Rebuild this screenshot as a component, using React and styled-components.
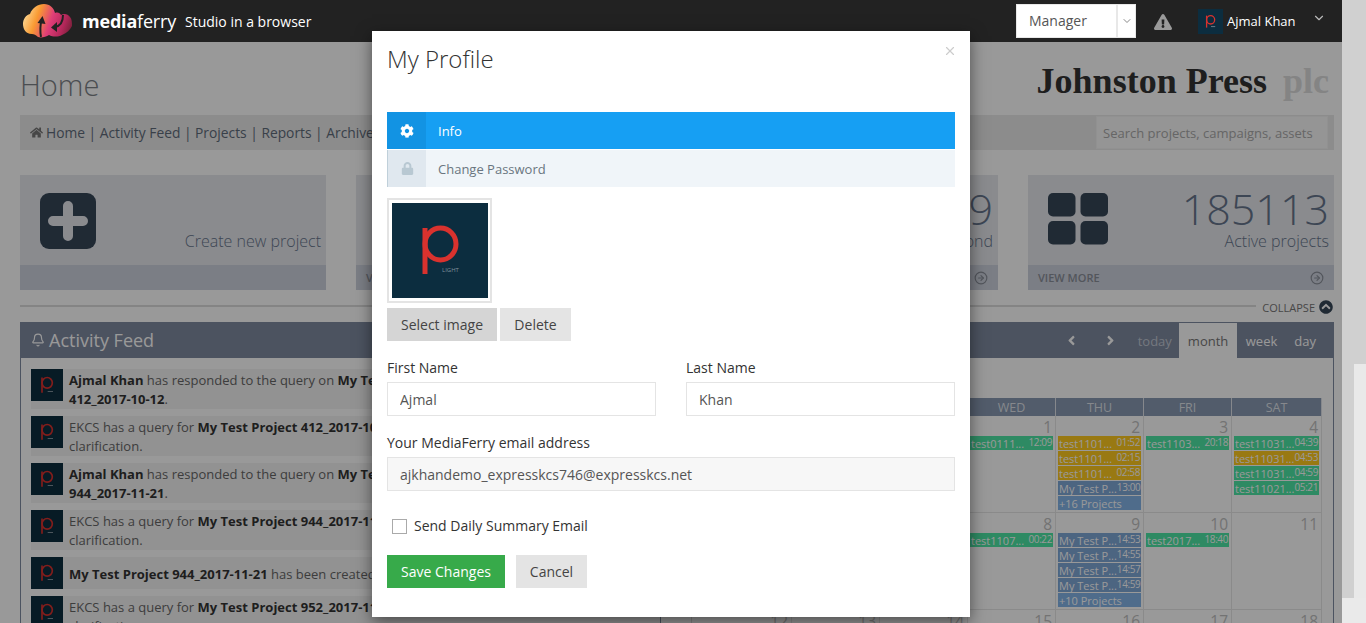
import React from 'react'
import styled, { createGlobalStyle } from 'styled-components'
import {
  FaCog,
  FaLock,
  FaHome,
  FaExclamationTriangle,
  FaAngleLeft,
  FaAngleRight,
  FaChevronCircleUp,
} from 'react-icons/fa'
import { Bell, ChevronDown, CircleArrowRight, X } from 'lucide-react'

const GlobalStyle = createGlobalStyle`
  html, body {
    margin: 0;
    height: 623px;
    overflow: hidden;
    font-family: "Open Sans", "Liberation Sans", sans-serif;
    color: #333;
  }
  * { box-sizing: border-box; }
`

const Shell = styled.div`
  display: grid;
  grid-template-columns: 1342px 24px;
  height: 623px;
  overflow: hidden;
`

const Page = styled.div`
  position: relative;
  overflow: hidden;
  background: #fff;
`

const Backdrop = styled.div`
  position: absolute;
  inset: 0;
  z-index: 1;
  background: rgba(0, 0, 0, 0.4);
`

/* scrollbar-ish strip on the right of the page */
const Strip = styled.div`
  display: flex;
  flex-direction: column;
  background: #eaeaea;
`

const StripTrack = styled.div`
  display: flex;
  height: 598px;
  padding: 364px 0 0 12px;
  background: #d0d0d0;
`

const StripThumb = styled.div`
  flex: 1;
  background: #e9e9e9;
`

const TopBar = styled.header`
  position: relative;
  z-index: 2;
  display: flex;
  align-items: center;
  height: 42px;
  padding: 0 16px 0 23px;
  background: #222;
  color: #fff;
`

const BrandName = styled.div`
  margin-left: 9px;
  font-size: 18px;
  letter-spacing: -0.2px;
  b { font-weight: 700; }
`

const Tagline = styled.div`
  margin-left: 9px;
  font-size: 14px;
`

const TopRight = styled.div`
  display: flex;
  align-items: center;
  margin-left: auto;
`

const RoleSelect = styled.div`
  display: flex;
  width: 120px;
  height: 34px;
  margin-top: -1px;
  background: #fff;
  border: 1px solid #e8e8e8;
  color: #555;
  font-size: 14px;
`

const RoleValue = styled.div`
  flex: 1;
  padding-left: 12px;
  line-height: 31px;
  border-right: 2px solid #e8e8e8;
`

const RoleArrow = styled.div`
  display: flex;
  align-items: center;
  justify-content: center;
  width: 17px;
  color: #888;
`

const AlertIcon = styled(FaExclamationTriangle)`
  margin: 2px 26px 0 18px;
  width: 18px;
  height: 16px;
  color: #999;
`

const TopName = styled.div`
  margin: 0 0 0 4px;
  font-size: 13px;
  width: 85px;
`

const TopChevron = styled(ChevronDown)`
  margin-top: -6px;
  color: #bbb;
`

const AvatarBox = styled.svg`
  display: block;
  flex: none;
  width: ${(p) => p.$w}px;
  height: ${(p) => p.$h || p.$w}px;
  background: #0c2d3f;
`

const Avatar = ({ w, h, label }) => (
  <AvatarBox $w={w} $h={h} viewBox="0 0 96 95">
    <ellipse cx="48.5" cy="41" rx="15.5" ry="16" fill="none" stroke="#d9322e" strokeWidth="5" />
    <path d="M33 25v46" stroke="#d9322e" strokeWidth="5" fill="none" />
    {label
      ? <text x="50" y="69" fontSize="6" fill="#7f8f9a" fontFamily="Open Sans">LIGHT</text>
      : <path d="M50 67h16" stroke="#7f8f9a" strokeWidth="3" />}
  </AvatarBox>
)

const Logo = () => (
  <svg width="50" height="34" viewBox="0 0 50 34" style={{ display: 'block', marginTop: -1 }}>
    <defs>
      <linearGradient id="cloud" x1="0" y1="8" x2="50" y2="26" gradientUnits="userSpaceOnUse">
        <stop offset="0" stopColor="#fde0a0" />
        <stop offset="0.28" stopColor="#f99a32" />
        <stop offset="0.55" stopColor="#df3e78" />
        <stop offset="0.8" stopColor="#b4275a" />
        <stop offset="1" stopColor="#6d1f33" />
      </linearGradient>
    </defs>
    <path
      fill="url(#cloud)"
      d="M9 30C2 30 0 24 0 20C0 15 3 11 7 10C9 4 15 0 21 0C27 0 31 4 32 9C35 8 37 9 38 11C41 9 45 10 47 13C49 15 49 19 49 22C47 26 44 29 39 31C35 33 30 33 26 31C23 33 18 34 15 33C13 31 11 30 9 30Z"
    />
    <path d="M18 33C17 27 17 22 18.5 16" stroke="#222" strokeWidth="2" fill="none" />
    <path d="M14.5 19L19.5 12L22.5 20Z" fill="#222" />
    <path d="M40 11C40 18 37 22 32 23" stroke="#222" strokeWidth="2" fill="none" />
    <path d="M34 18L28 23.5L34 28Z" fill="#222" />
  </svg>
)

const Main = styled.main`
  padding: 0 8px 0 20px;
`

const TitleRow = styled.div`
  display: flex;
  align-items: center;
  justify-content: space-between;
  height: 73px;
`

const PageTitle = styled.h1`
  margin: 12px 0 0;
  font-size: 29px;
  font-weight: 300;
  color: #7d8288;
`

const ClientLogo = styled.div`
  margin: 4px 5px 0 0;
  font-family: "Liberation Serif", serif;
  font-size: 36px;
  font-weight: 700;
  color: #333;
  span {
    margin-left: 16px;
    color: #dcdcdc;
  }
`

const NavBar = styled.nav`
  display: flex;
  align-items: center;
  height: 35px;
  padding: 0 6px 0 10px;
  background: #e9e9e9;
  color: #5f6c7b;
  font-size: 13.8px;
`

const NavHomeIcon = styled(FaHome)`
  width: 13px;
  height: 13px;
  margin-right: 3px;
  color: #777;
`

const NavSearch = styled.input`
  width: 232px;
  height: 33px;
  margin-left: auto;
  padding: 0 6px;
  border: 1px solid #f2f2f2;
  background: #f8f8f8;
  font: 13px "Open Sans", sans-serif;
  &::placeholder { color: #aaa; opacity: 1; }
`

const Cards = styled.section`
  display: grid;
  grid-template-columns: repeat(4, 306px);
  gap: 30px;
  margin-top: 25px;
`

const Card = styled.div`
  display: flex;
  flex-direction: column;
  height: 115px;
  background: #e6e8ed;
`

const CardBody = styled.div`
  flex: 1;
  min-height: 0;
  display: flex;
  justify-content: space-between;
  padding: 18px 5px 13px 20px;
`

const CardText = styled.div`
  display: flex;
  flex-direction: column;
  align-items: flex-end;
  justify-content: flex-end;
  color: #66758c;
`

const CardNumber = styled.div`
  font-size: 43px;
  font-weight: 300;
  line-height: 36px;
  margin-bottom: 3px;
`

const CardLabel = styled.div`
  font-size: 16px;
  font-weight: 300;
  line-height: 22px;
`

const CardFoot = styled.div`
  flex: none;
  display: flex;
  align-items: center;
  justify-content: space-between;
  height: 25px;
  padding: 0 10px;
  background: #cdd2de;
  color: #8a8f99;
  font-size: 11px;
  font-weight: 600;
`

const PlusIcon = () => (
  <svg width="56" height="56" viewBox="0 0 56 56">
    <rect width="56" height="56" rx="9" fill="#364658" />
    <path d="M28 13v30M13 28h30" stroke="#e6e8ed" strokeWidth="10" strokeLinecap="round" />
  </svg>
)

const GridIcon = () => (
  <svg width="60" height="52" viewBox="0 0 60 52">
    <rect width="27.5" height="23.5" rx="5" fill="#364658" />
    <rect x="32.5" width="27.5" height="23.5" rx="5" fill="#364658" />
    <rect y="28" width="27.5" height="23.5" rx="5" fill="#364658" />
    <rect x="32.5" y="28" width="27.5" height="23.5" rx="5" fill="#364658" />
  </svg>
)

const CollapseRow = styled.div`
  display: flex;
  align-items: center;
  gap: 6px;
  height: 14px;
  margin-top: 10px;
  padding-right: 1px;
  color: #777;
  font-size: 11px;
`

const CollapseLine = styled.div`
  flex: 1;
  height: 2px;
  margin-top: -2px;
  background: #ddd;
`

const CollapseIcon = styled(FaChevronCircleUp)`
  width: 14px;
  height: 14px;
  margin-left: -2px;
  color: #364658;
`

const Panel = styled.section`
  margin-top: 8px;
  border: solid #7f8aa0;
  border-width: 0 1px;
`

const PanelHead = styled.div`
  display: flex;
  align-items: stretch;
  height: 36px;
  background: #7f8aa0;
  color: #fff;
`

const PanelTitle = styled.div`
  display: flex;
  align-items: center;
  gap: 4px;
  padding-left: 10px;
  font-size: 18px;
`

const CalNav = styled.div`
  display: flex;
  align-items: center;
  margin-left: auto;
  padding-top: 1px;
  font-size: 13px;
`

const CalArrow = styled.span`
  display: flex;
  width: 39px;
  justify-content: center;
`

const CalTab = styled.span`
  display: flex;
  align-items: center;
  align-self: stretch;
  padding: 0 ${(p) => p.$pad}px;
  ${(p) => p.$on && 'background: #fff; color: #777;'}
  ${(p) => p.$off && 'color: #c2c8d4;'}
`

const PanelBody = styled.div`
  display: flex;
  height: 270px;
`

const Feed = styled.div`
  width: 640px;
  padding: 11px 0 0 10px;
  border-right: 1px solid #7f8aa0;
`

const FeedItem = styled.div`
  display: flex;
  margin-bottom: 7px;
  padding-right: 26px;
  background: #f4f4f4;
  font-size: 13px;
  line-height: 19px;
`

const FeedText = styled.div`
  flex: 1;
  align-self: center;
  margin-left: 6px;
  padding: 2px 0 0;
  color: #666;
  b { color: #333; font-weight: 700; }
`

const ProjectCode = styled.span`
  white-space: nowrap;
`

const FeedStamp = styled.div`
  align-self: flex-end;
  width: 101px;
  font-size: 11px;
  white-space: nowrap;
  color: #666;
`

const Calendar = styled.div`
  width: 630px;
  margin-left: 30px;
  padding-left: 12px;
  border-left: 1px solid #dcdcdc;
`

const CalTitle = styled.div`
  height: 40px;
  line-height: 39px;
  font-size: 15px;
  color: #777;
`

const CalGrid = styled.div`
  display: grid;
  grid-template-columns: repeat(6, 88px) 90px;
`

const DayHead = styled.div`
  height: 18px;
  line-height: 19px;
  text-align: center;
  background: #8999b2;
  border-right: 1px solid #dfe3ea;
  color: #dfe3ea;
  font-size: 12.5px;
`

const DayCell = styled.div`
  height: 97px;
  padding: 0 2px;
  border: solid #e6e6e6;
  border-width: 0 1px 1px 0;
`

const DayNumber = styled.div`
  height: 20px;
  padding: 1px 1px 0 0;
  line-height: 20px;
  text-align: right;
  font-size: 15.5px;
  color: #c0c0c0;
`

const EVENT_COLORS = {
  green: '#4ee6a5',
  yellow: '#ffca1f',
  blue: '#7fa8d8',
  more: '#84b4e8',
}

const Event = styled.div`
  display: flex;
  justify-content: space-between;
  height: 14px;
  margin-bottom: 1px;
  padding: 0 1px;
  background: ${(p) => EVENT_COLORS[p.$kind]};
  color: #fff;
  font-size: 11px;
  line-height: 16px;
  white-space: nowrap;
  overflow: hidden;
  em {
    font-style: normal;
    font-size: 10px;
    letter-spacing: -0.4px;
    line-height: 13px;
  }
`

const WEEKDAYS = ['SUN', 'MON', 'TUE', 'WED', 'THU', 'FRI', 'SAT']

const project = (time) => ['blue', 'My Test P...', time]

const DAYS = [
  { n: 29 }, { n: 30 }, { n: 31 },
  { n: 1, events: [['green', 'test0111...', '12:09']] },
  {
    n: 2,
    events: [
      ['yellow', 'test1101...', '01:52'],
      ['yellow', 'test1101...', '02:15'],
      ['yellow', 'test1101...', '02:58'],
      project('13:00'),
      ['more', '+16 Projects'],
    ],
  },
  { n: 3, events: [['green', 'test1103...', '20:18']] },
  {
    n: 4,
    events: [
      ['green', 'test11031...', '04:39'],
      ['yellow', 'test11031...', '04:53'],
      ['green', 'test11031...', '04:59'],
      ['green', 'test11021...', '05:21'],
    ],
  },
  { n: 5 }, { n: 6 }, { n: 7 },
  { n: 8, events: [['green', 'test1107...', '00:22']] },
  {
    n: 9,
    events: [
      project('14:53'),
      project('14:55'),
      project('14:57'),
      project('14:59'),
      ['more', '+10 Projects'],
    ],
  },
  { n: 10, events: [['green', 'test2017...', '18:40']] },
  { n: 11 },
  { n: 12 }, { n: 13 }, { n: 14 }, { n: 15 }, { n: 16 }, { n: 17 }, { n: 18 },
]

const FEED = [
  <><b>Ajmal Khan</b> has responded to the query on <b>My Test Project <ProjectCode>412_2017-10-12</ProjectCode></b>.</>,
  <>EKCS has a query for <b>My Test Project <ProjectCode>412_2017-10-12</ProjectCode></b> and requires clarification.</>,
  <><b>Ajmal Khan</b> has responded to the query on <b>My Test Project <ProjectCode>944_2017-11-21</ProjectCode></b>.</>,
  <>EKCS has a query for <b>My Test Project <ProjectCode>944_2017-11-21</ProjectCode></b> and requires clarification.</>,
  <><b>My Test Project <ProjectCode>944_2017-11-21</ProjectCode></b> has been created.</>,
  <>EKCS has a query for <b>My Test Project <ProjectCode>952_2017-11-21</ProjectCode></b> and requires clarification.</>,
]

/* modal */
const ModalLayer = styled.div`
  position: absolute;
  inset: 0;
  z-index: 3;
  display: flex;
  justify-content: center;
  align-items: flex-start;
  padding-top: 31px;
`

const Modal = styled.div`
  position: relative;
  width: 598px;
  padding: 13px 15px 29px;
  background: #fff;
  box-shadow: 0 5px 15px rgba(0, 0, 0, 0.5);
`

const ModalTitle = styled.h2`
  margin: 0 0 38px;
  font-size: 24px;
  font-weight: 300;
  line-height: 30px;
  color: #333;
`

const CloseButton = styled(X)`
  position: absolute;
  top: 13px;
  right: 13px;
  color: #ccc;
`

const Tab = styled.div`
  display: flex;
  align-items: center;
  height: 37px;
  margin-bottom: 1px;
  background: ${(p) => (p.$active ? '#169ff3' : '#f0f5f9')};
  color: ${(p) => (p.$active ? '#fff' : '#6a7580')};
  font-size: 13px;
`

const TabIcon = styled.div`
  display: flex;
  align-items: center;
  justify-content: center;
  width: 39px;
  height: 100%;
  margin-right: 12px;
  background: ${(p) => (p.$active ? '#1293e3' : '#e0e8ef')};
  border-left: 1px solid ${(p) => (p.$active ? '#1293e3' : '#c0d0da')};
  color: ${(p) => (p.$active ? '#fff' : '#b8c8d2')};
`

const PhotoFrame = styled.div`
  width: 105px;
  height: 105px;
  margin-top: 11px;
  padding: 3px;
  border: 2px solid #e4e4e4;
`

const ButtonRow = styled.div`
  display: flex;
  gap: ${(p) => p.$gap}px;
  margin-top: ${(p) => p.$top}px;
`

const Button = styled.button`
  height: 33px;
  width: ${(p) => p.$w}px;
  padding: 0;
  border: 0;
  background: ${(p) => p.$bg || '#e4e4e4'};
  color: ${(p) => (p.$bg === '#37aa4a' ? '#fff' : '#444')};
  font: 14px "Open Sans", sans-serif;
`

const FieldRow = styled.div`
  display: grid;
  grid-template-columns: ${(p) => (p.$two ? '269px 269px' : '1fr')};
  justify-content: space-between;
  margin-top: 17px;
`

const Label = styled.label`
  display: block;
  margin-bottom: 4px;
  font-size: 14px;
  line-height: 20px;
  color: #333;
`

const TextInput = styled.input`
  display: block;
  width: 100%;
  height: 34px;
  padding: 0 12px;
  border: 1px solid #e4e4e4;
  background: ${(p) => (p.readOnly ? '#f7f7f7' : '#fff')};
  color: #555;
  font: 14px "Open Sans", sans-serif;
  outline: none;
`

const CheckRow = styled.label`
  display: flex;
  align-items: center;
  gap: 7px;
  height: 20px;
  margin-top: 24px;
  padding-left: 5px;
  font-size: 14px;
`

const CheckBox = styled.input`
  appearance: none;
  width: 15px;
  height: 15px;
  margin: 2px 0 0;
  border: 1px solid #aaa;
  background: #fff;
`

export default function App() {
  return (
    <Shell>
      <GlobalStyle />
      <Page>
        <TopBar>
          <Logo />
          <BrandName><b>media</b>ferry</BrandName>
          <Tagline>Studio in a browser</Tagline>
          <TopRight>
            <RoleSelect>
              <RoleValue>Manager</RoleValue>
              <RoleArrow><ChevronDown size={12} /></RoleArrow>
            </RoleSelect>
            <AlertIcon />
            <Avatar w={25} />
            <TopName>Ajmal Khan</TopName>
            <TopChevron size={14} />
          </TopRight>
        </TopBar>

        <Main>
          <TitleRow>
            <PageTitle>Home</PageTitle>
            <ClientLogo>Johnston Press<span>plc</span></ClientLogo>
          </TitleRow>

          <NavBar>
            <NavHomeIcon />
            Home | Activity Feed | Projects | Reports | Archive
            <NavSearch placeholder="Search projects, campaigns, assets" />
          </NavBar>

          <Cards>
            <Card>
              <CardBody>
                <PlusIcon />
                <CardText><CardLabel>Create new project</CardLabel></CardText>
              </CardBody>
              <CardFoot />
            </Card>
            <Card>
              <CardBody>
                <GridIcon />
                <CardText>
                  <CardNumber>412</CardNumber>
                  <CardLabel>Awaiting approval</CardLabel>
                </CardText>
              </CardBody>
              <CardFoot>VIEW MORE<CircleArrowRight size={14} /></CardFoot>
            </Card>
            <Card>
              <CardBody>
                <GridIcon />
                <CardText>
                  <CardNumber>129</CardNumber>
                  <CardLabel>Awaiting respond</CardLabel>
                </CardText>
              </CardBody>
              <CardFoot>VIEW MORE<CircleArrowRight size={14} /></CardFoot>
            </Card>
            <Card>
              <CardBody>
                <GridIcon />
                <CardText>
                  <CardNumber>185113</CardNumber>
                  <CardLabel>Active projects</CardLabel>
                </CardText>
              </CardBody>
              <CardFoot>VIEW MORE<CircleArrowRight size={14} /></CardFoot>
            </Card>
          </Cards>

          <CollapseRow>
            <CollapseLine />
            COLLAPSE
            <CollapseIcon />
          </CollapseRow>

          <Panel>
            <PanelHead>
              <PanelTitle><Bell size={14} />Activity Feed</PanelTitle>
              <CalNav>
                <CalArrow><FaAngleLeft size={15} /></CalArrow>
                <CalArrow><FaAngleRight size={15} /></CalArrow>
                <CalTab $off $pad={7.5}>today</CalTab>
                <CalTab $on $pad={8.5}>month</CalTab>
                <CalTab $pad={9}>week</CalTab>
                <CalTab $pad={8}>day</CalTab>
                <CalTab $pad={4.5} />
              </CalNav>
            </PanelHead>
            <PanelBody>
              <Feed>
                {FEED.map((text, i) => (
                  <FeedItem key={i}>
                    <Avatar w={32} />
                    <FeedText>{text}</FeedText>
                    <FeedStamp>{i === 5 ? '21 Nov 2017 | 11:21 AM' : ''}</FeedStamp>
                  </FeedItem>
                ))}
              </Feed>
              <Calendar>
                <CalTitle>November 2017</CalTitle>
                <CalGrid>
                  {WEEKDAYS.map((d) => <DayHead key={d}>{d}</DayHead>)}
                  {DAYS.map((day) => (
                    <DayCell key={day.n}>
                      <DayNumber>{day.n}</DayNumber>
                      {(day.events || []).map(([kind, name, time], i) => (
                        <Event key={i} $kind={kind}>
                          <span>{name}</span>
                          {time && <em>{time}</em>}
                        </Event>
                      ))}
                    </DayCell>
                  ))}
                </CalGrid>
              </Calendar>
            </PanelBody>
          </Panel>
        </Main>

        <Backdrop />

        <ModalLayer>
          <Modal>
            <CloseButton size={14} />
            <ModalTitle>My Profile</ModalTitle>
            <Tab $active>
              <TabIcon $active><FaCog size={14} /></TabIcon>
              Info
            </Tab>
            <Tab>
              <TabIcon><FaLock size={13} /></TabIcon>
              Change Password
            </Tab>
            <PhotoFrame><Avatar w={96} h={95} label /></PhotoFrame>
            <ButtonRow $gap={3} $top={5}>
              <Button $w={110} $bg="#d5d5d5">Select image</Button>
              <Button $w={71}>Delete</Button>
            </ButtonRow>
            <FieldRow $two>
              <div>
                <Label>First Name</Label>
                <TextInput defaultValue="Ajmal" />
              </div>
              <div>
                <Label>Last Name</Label>
                <TextInput defaultValue="Khan" />
              </div>
            </FieldRow>
            <FieldRow>
              <div>
                <Label>Your MediaFerry email address</Label>
                <TextInput readOnly value="ajkhandemo_expresskcs746@expresskcs.net" />
              </div>
            </FieldRow>
            <CheckRow>
              <CheckBox type="checkbox" />
              Send Daily Summary Email
            </CheckRow>
            <ButtonRow $gap={11} $top={20}>
              <Button $w={118} $bg="#37aa4a">Save Changes</Button>
              <Button $w={71}>Cancel</Button>
            </ButtonRow>
          </Modal>
        </ModalLayer>
      </Page>
      <Strip>
        <StripTrack><StripThumb /></StripTrack>
      </Strip>
    </Shell>
  )
}
